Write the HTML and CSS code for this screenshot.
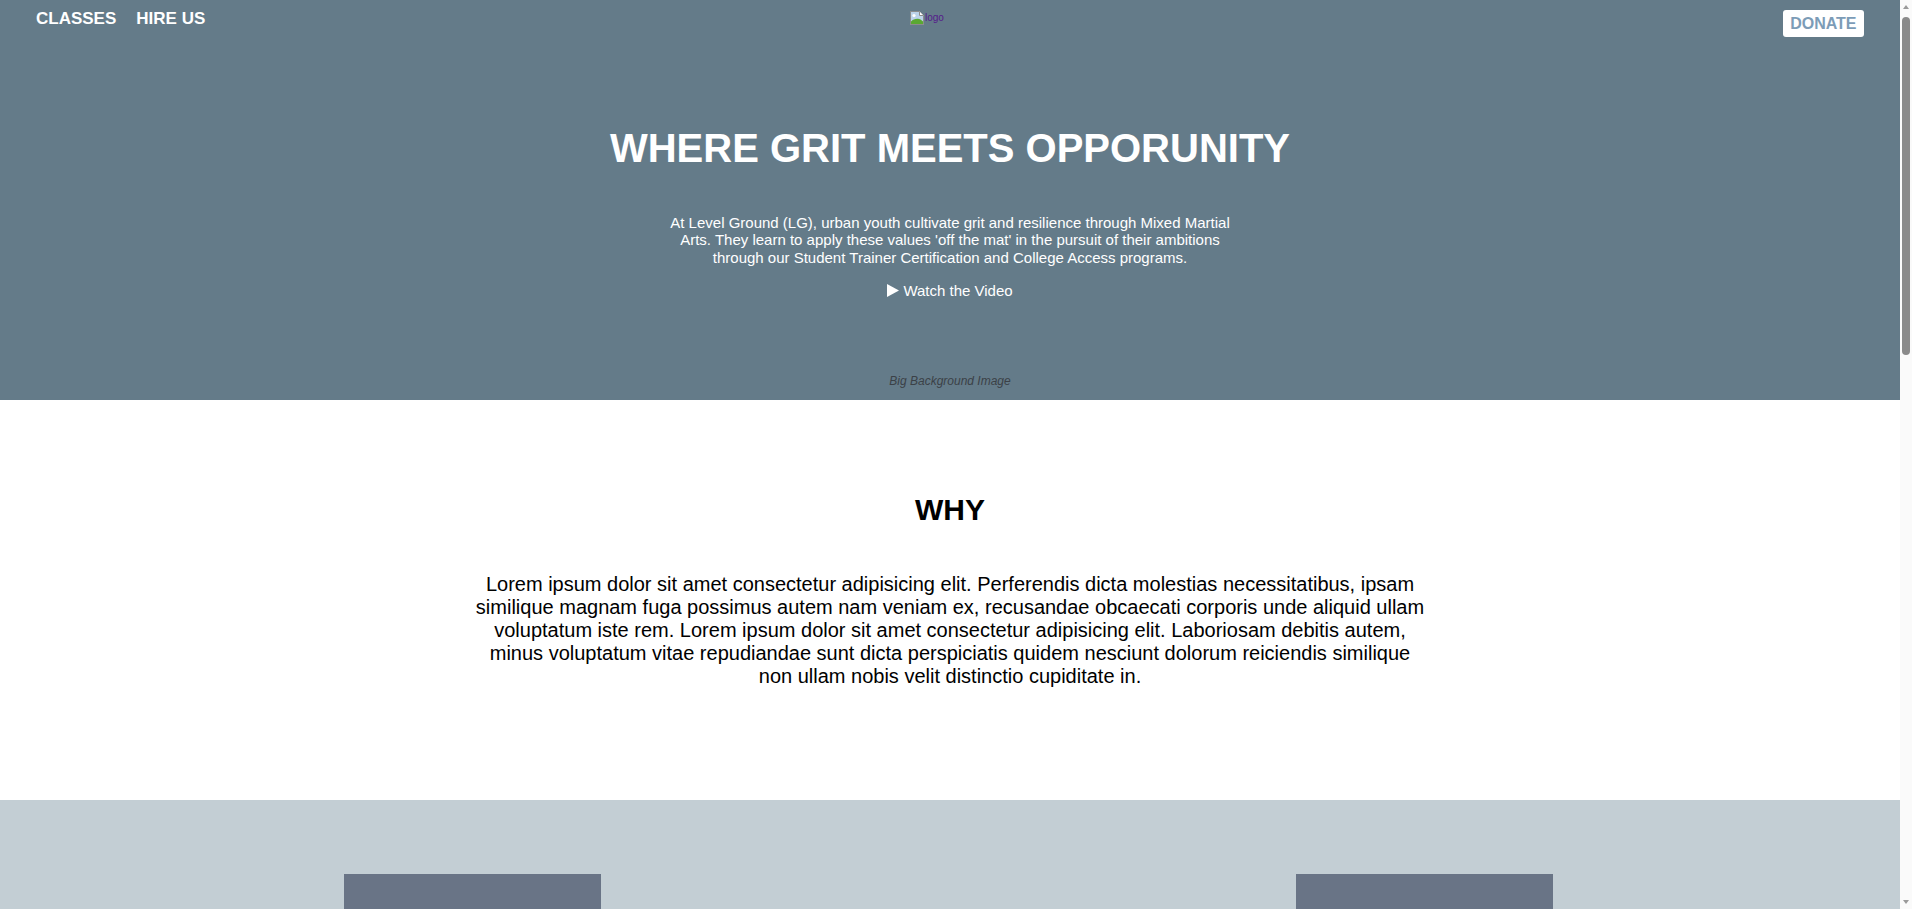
FILE: index.html
```html
<!DOCTYPE html>
<html lang="en">
<head>
<meta charset="utf-8">
<title>Level Ground</title>
<link rel="stylesheet" href="styles.css">
</head>
<body>
<header class="hero">
  <nav class="nav">
    <div class="nav-links">
      <a class="nav-link" href="#">CLASSES</a>
      <a class="nav-link" href="#">HIRE US</a>
    </div>
    <a class="logo" href="#">
      <svg class="logo-icon" width="16" height="16" viewBox="0 0 16 16">
        <path d="M1.5 1.5h9l4 4v9h-13z" fill="#f4f6f8" stroke="#8c8c8c"/>
        <path d="M2 2h8.3v3.7H14V14H2z" fill="#bcd3ea"/>
        <path d="M10.5 1.5v4h4" fill="#ffffff" stroke="#8c8c8c"/>
        <path d="M2 14v-2.5c2-2.2 5-3.2 8-2.6 1.5.3 3 1.4 4 2.6V14z" fill="#5aa832"/>
        <circle cx="5" cy="5.5" r="1.6" fill="#ffffff"/>
      </svg>
      <span class="logo-alt">logo</span>
    </a>
    <a class="donate" href="#">DONATE</a>
  </nav>
  <div class="hero-body">
    <h1 class="hero-title">WHERE GRIT MEETS OPPORUNITY</h1>
    <p class="hero-text">At Level Ground (LG), urban youth cultivate grit and resilience through Mixed Martial Arts. They learn to apply these values 'off the mat' in the pursuit of their ambitions through our Student Trainer Certification and College Access programs.</p>
    <a class="watch" href="#"><svg class="play" width="12" height="13" viewBox="0 0 12 13"><path d="M0 0L12 6.5L0 13z" fill="#ffffff"/></svg>Watch the Video</a>
  </div>
  <p class="bg-note">Big Background Image</p>
</header>

<section class="why">
  <h2 class="why-title">WHY</h2>
  <p class="why-text">Lorem ipsum dolor sit amet consectetur adipisicing elit. Perferendis dicta molestias necessitatibus, ipsam similique magnam fuga possimus autem nam veniam ex, recusandae obcaecati corporis unde aliquid ullam voluptatum iste rem. Lorem ipsum dolor sit amet consectetur adipisicing elit. Laboriosam debitis autem, minus voluptatum vitae repudiandae sunt dicta perspiciatis quidem nesciunt dolorum reiciendis similique non ullam nobis velit distinctio cupiditate in.</p>
</section>

<section class="programs">
  <div class="card"></div>
  <div class="card"></div>
</section>

<div class="scrollbar" aria-hidden="true">
  <svg class="sb-arrow" width="12" height="14" viewBox="0 0 12 14"><path d="M3 9L6 5L9 9z" fill="#9a9a9a"/></svg>
  <div class="sb-track"><div class="sb-thumb"></div></div>
  <svg class="sb-arrow" width="12" height="14" viewBox="0 0 12 14"><path d="M3 5L6 9L9 5z" fill="#9a9a9a"/></svg>
</div>
</body>
</html>
```

FILE: styles.css
```css
* {
  box-sizing: border-box;
}

html, body {
  margin: 0;
  padding: 0;
}

body {
  font-family: "Liberation Sans", Arial, sans-serif;
  color: #000000;
  background: #ffffff;
  padding-right: 12px;
}

a {
  text-decoration: none;
}

.hero {
  height: 400px;
  background: #647b89;
  display: flex;
  flex-direction: column;
  align-items: stretch;
}

.nav {
  display: grid;
  grid-template-columns: 1fr auto 1fr;
  align-items: start;
  padding: 0 36px;
}

.nav-links {
  display: flex;
  gap: 20px;
  padding-top: 9px;
}

.nav-link {
  color: #ffffff;
  font-weight: bold;
  font-size: 17px;
}

.logo {
  width: 82px;
  padding-top: 10px;
  display: flex;
  align-items: flex-start;
}

.logo-icon {
  display: block;
  flex: none;
}

.logo-alt {
  font-size: 10px;
  color: #551a8b;
  line-height: 12px;
  margin-top: 2px;
}

.donate {
  justify-self: end;
  margin-top: 10px;
  height: 27px;
  line-height: 27px;
  padding: 0 7.5px;
  background: #ffffff;
  border-radius: 3px;
  color: #7c9cb7;
  font-weight: bold;
  font-size: 16px;
}

.hero-body {
  display: flex;
  flex-direction: column;
  align-items: center;
  margin-top: 88px;
  color: #ffffff;
}

.hero-title {
  margin: 0;
  font-size: 40px;
  font-weight: bold;
  line-height: 46px;
}

.hero-text {
  margin: 43px 0 0;
  max-width: 580px;
  text-align: center;
  font-size: 15px;
  line-height: 17.25px;
}

.watch {
  margin-top: 16px;
  display: flex;
  align-items: center;
  gap: 4px;
  color: #ffffff;
  font-size: 15px;
  line-height: 17px;
}

.play {
  display: block;
}

.bg-note {
  margin: auto 0 12px;
  text-align: center;
  font-style: italic;
  font-size: 12px;
  line-height: 14px;
  color: #3b4147;
}

.why {
  height: 400px;
  padding-top: 93px;
  display: flex;
  flex-direction: column;
  align-items: center;
}

.why-title {
  margin: 0;
  font-size: 30px;
  font-weight: bold;
  line-height: 34.5px;
}

.why-text {
  margin: 45px 0 0;
  width: 955px;
  text-align: center;
  font-size: 20px;
  line-height: 23px;
}

.programs {
  background: #c3ced4;
  min-height: 1550px;
  padding: 74px 347px 0 344px;
  display: flex;
  justify-content: space-between;
  align-items: flex-start;
}

.card {
  width: 257px;
  height: 320px;
  background: #697486;
}

.scrollbar {
  position: fixed;
  top: 0;
  right: 0;
  width: 12px;
  height: 100vh;
  background: #fafafa;
  display: flex;
  flex-direction: column;
}

.sb-arrow {
  display: block;
  flex: none;
}

.sb-track {
  flex: 1;
  padding: 3px 0 0;
  display: flex;
  justify-content: center;
}

.sb-thumb {
  width: 8px;
  height: 338px;
  border-radius: 4px;
  background: #8a8a8a;
}
```
